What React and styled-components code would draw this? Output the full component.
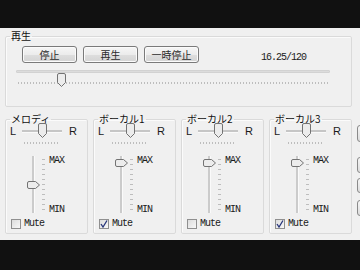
import React from "react";
import styled, { createGlobalStyle } from "styled-components";

const GlobalStyle = createGlobalStyle`
  html, body {
    margin: 0;
    padding: 0;
    background: #111111;
  }
  body {
    font-family: "Noto Sans CJK JP", "Liberation Sans", sans-serif;
  }
`;

const CJK = `"Noto Sans CJK JP", "Liberation Sans", sans-serif`;
const MONO = `"Liberation Mono", "DejaVu Sans Mono", monospace`;

const channels = [
  { name: "メロディ", pan: 0.5, volume: 0.5, mute: false },
  { name: "ボーカル1", pan: 0.5, volume: 1, mute: true },
  { name: "ボーカル2", pan: 0.5, volume: 1, mute: false },
  { name: "ボーカル3", pan: 0.5, volume: 1, mute: true },
];

const sideButtons = [
  { top: 12, height: 17 },
  { top: 15, height: 16 },
  { top: 5, height: 15 },
  { top: 7, height: 16 },
];

const ThumbDown = ({ w = 9, h = 14 }) => (
  <svg width={w} height={h} viewBox={`0 0 ${w} ${h}`}>
    <path
      d={`M0.5 2 Q0.5 0.5 2 0.5 H${w - 2} Q${w - 0.5} 0.5 ${w - 0.5} 2 V${h - 4.5} L${w / 2} ${h - 0.5} L0.5 ${h - 4.5} Z`}
      fill="#ececec"
      stroke="#737373"
    />
  </svg>
);

const ThumbRight = () => (
  <svg width="13" height="8" viewBox="0 0 13 8">
    <path
      d="M2 0.5 H8.5 L12.5 4 L8.5 7.5 H2 Q0.5 7.5 0.5 6 V2 Q0.5 0.5 2 0.5 Z"
      fill="#ececec"
      stroke="#737373"
    />
  </svg>
);

const SeekSlider = ({ value }) => (
  <SeekWrap>
    <SeekTrack />
    <ThumbHolder style={{ left: Math.round(value * 305) }}>
      <ThumbDown />
    </ThumbHolder>
    <SeekTicks />
  </SeekWrap>
);

const PanSlider = ({ value }) => (
  <PanWrap>
    <PanTrack />
    <ThumbHolder style={{ left: Math.round(value * 31) }}>
      <ThumbDown w={9} h={15} />
    </ThumbHolder>
  </PanWrap>
);

const VolumeSlider = ({ value }) => (
  <VolWrap>
    <VolTrack />
    <VolTicks />
    <ThumbHolder style={{ top: 3 + Math.round((1 - value) * 44), left: 0 }}>
      <ThumbRight />
    </ThumbHolder>
  </VolWrap>
);

const Check = ({ checked }) => (
  <CheckBox>
    {checked && (
      <svg width="8" height="8" viewBox="0 0 8 8">
        <path d="M1 4 L3 7 L7 0.5" fill="none" stroke="#27357a" strokeWidth="1.3" />
      </svg>
    )}
  </CheckBox>
);

const Channel = ({ name, pan, volume, mute }) => (
  <ChannelGroup>
    <Legend>{name}</Legend>
    <PanRow>
      <SideLetter>L</SideLetter>
      <PanSlider value={pan} />
      <SideLetter>R</SideLetter>
    </PanRow>
    <PanTicks />
    <VolumeArea>
      <VolumeSlider value={volume} />
      <VolLabels>
        <span>MAX</span>
        <span>MIN</span>
      </VolLabels>
    </VolumeArea>
    <MuteRow>
      <Check checked={mute} />
      <MuteLabel>Mute</MuteLabel>
    </MuteRow>
  </ChannelGroup>
);

const App = () => {
  return (
    <Screen>
      <GlobalStyle />
      <BlackBar $h={28} />
      <Client>
        <PlayGroup>
          <Legend>再生</Legend>
          <TransportRow>
            <Button>停止</Button>
            <Button>再生</Button>
            <Button>一時停止</Button>
            <Time>16.25/120</Time>
          </TransportRow>
          <SeekSlider value={16.25 / 120} />
        </PlayGroup>
        <Channels>
          {channels.map((ch) => (
            <Channel key={ch.name} {...ch} />
          ))}
          <SideColumn>
            {sideButtons.map((b, i) => (
              <SideButton key={i} $top={b.top} $h={b.height} />
            ))}
          </SideColumn>
        </Channels>
      </Client>
      <BlackBar $h={30} />
    </Screen>
  );
};

export default App;

const Screen = styled.div`
  width: 360px;
  height: 270px;
  display: flex;
  flex-direction: column;
  overflow: hidden;
`;

const BlackBar = styled.div`
  height: ${(p) => p.$h}px;
  background: #111111;
  flex: none;
`;

const Client = styled.div`
  height: 212px;
  background: #f0f0f0;
  padding: 2px 0 0 5px;
  box-sizing: border-box;
  overflow: hidden;
  color: #111;
`;

const Fieldset = styled.fieldset`
  margin: 0;
  padding: 0;
  border: 1px solid #dadada;
  box-shadow: inset 1px 1px 0 #fbfbfb;
  border-radius: 2px;
  box-sizing: border-box;
  min-width: 0;
`;

const PlayGroup = styled(Fieldset)`
  width: 347px;
  height: 77px;
`;

const Legend = styled.legend`
  margin-left: 4px;
  padding: 0 1px;
  font-family: ${CJK};
  font-size: 10px;
  line-height: 12px;
  color: #111;
`;

const TransportRow = styled.div`
  display: flex;
  align-items: flex-end;
  gap: 6px;
  margin-top: 4px;
  padding-left: 16px;
`;

const Button = styled.div`
  width: 55px;
  height: 17px;
  box-sizing: border-box;
  border: 1px solid #7a7a7a;
  border-radius: 3px;
  background: linear-gradient(#f6f6f6 0%, #ececec 50%, #dedede 51%, #d4d4d4 100%);
  box-shadow: inset 0 0 0 1px #fbfbfb;
  display: flex;
  align-items: center;
  justify-content: center;
  font-family: ${CJK};
  font-size: 10px;
  line-height: 10px;
  color: #2a2a2a;
`;

const Time = styled.div`
  margin-left: 56px;
  font-family: ${MONO};
  font-size: 10px;
  letter-spacing: -1px;
  line-height: 10px;
  color: #1a1a1a;
`;

const SeekWrap = styled.div`
  position: relative;
  margin: 4px 0 0 10px;
  width: 314px;
  height: 24px;
`;

const SeekTrack = styled.div`
  margin-top: 7px;
  height: 3px;
  background: #dcdcdc;
  border: 1px solid #d2d2d2;
  border-radius: 1px;
  box-sizing: border-box;
`;

const SeekTicks = styled.div`
  margin: 9px 2px 0 2px;
  height: 2px;
  background: repeating-linear-gradient(to right, #bdbdbd 0 1px, transparent 1px 3px);
`;

const ThumbHolder = styled.div`
  position: absolute;
  top: 3px;
  line-height: 0;
`;

const Channels = styled.div`
  display: flex;
  gap: 5px;
  margin-top: 6px;
  width: 420px;
`;

const ChannelGroup = styled(Fieldset)`
  width: 83px;
  height: 121px;
  flex: none;
`;

const PanRow = styled.div`
  display: flex;
  align-items: center;
  gap: 7px;
  margin-top: -2px;
  padding-left: 4px;
  height: 16px;
`;

const SideLetter = styled.span`
  font-family: "Liberation Sans", Arial, sans-serif;
  font-size: 11px;
  line-height: 12px;
  width: 5px;
  color: #1a1a1a;
`;

const PanWrap = styled.div`
  position: relative;
  width: 40px;
  height: 16px;
  ${ThumbHolder} {
    top: 0;
  }
`;

const PanTrack = styled.div`
  margin-top: 7px;
  height: 2px;
  background: #c6c6c6;
  border-bottom: 1px solid #fafafa;
`;

const PanTicks = styled.div`
  margin: 3px 0 0 18px;
  width: 36px;
  height: 2px;
  background: repeating-linear-gradient(to right, #bdbdbd 0 1px, transparent 1px 3px);
`;

const VolumeArea = styled.div`
  display: flex;
  margin-top: 12px;
  padding-left: 21px;
  height: 60px;
`;

const VolWrap = styled.div`
  position: relative;
  width: 22px;
  height: 57px;
`;

const VolTrack = styled.div`
  position: absolute;
  left: 5px;
  top: 0;
  width: 2px;
  height: 57px;
  background: #cbcbcb;
  border-right: 1px solid #fafafa;
`;

const VolTicks = styled.div`
  position: absolute;
  left: 15px;
  top: 3px;
  width: 3px;
  height: 52px;
  background: repeating-linear-gradient(to bottom, #bdbdbd 0 1px, transparent 1px 5px);
`;

const VolLabels = styled.div`
  display: flex;
  flex-direction: column;
  justify-content: space-between;
  height: 59px;
  font-family: ${MONO};
  font-size: 10px;
  letter-spacing: -1px;
  line-height: 10px;
  color: #1a1a1a;
`;

const MuteRow = styled.div`
  display: flex;
  align-items: center;
  gap: 3px;
  margin-top: 3px;
  padding-left: 5px;
`;

const CheckBox = styled.div`
  width: 10px;
  height: 10px;
  box-sizing: border-box;
  border: 1px solid #8f8f8f;
  background: linear-gradient(135deg, #dcdcdc, #f8f8f8);
  display: flex;
  align-items: center;
  justify-content: center;
`;

const MuteLabel = styled.span`
  font-family: ${MONO};
  font-size: 10px;
  letter-spacing: -1px;
  line-height: 10px;
  color: #1a1a1a;
`;

const SideColumn = styled.div`
  display: flex;
  flex-direction: column;
`;

const SideButton = styled.div`
  margin-top: ${(p) => p.$top}px;
  width: 22px;
  height: ${(p) => p.$h}px;
  box-sizing: border-box;
  border: 1px solid #8a8a8a;
  border-radius: 3px;
  background: linear-gradient(#f6f6f6, #dcdcdc);
`;
